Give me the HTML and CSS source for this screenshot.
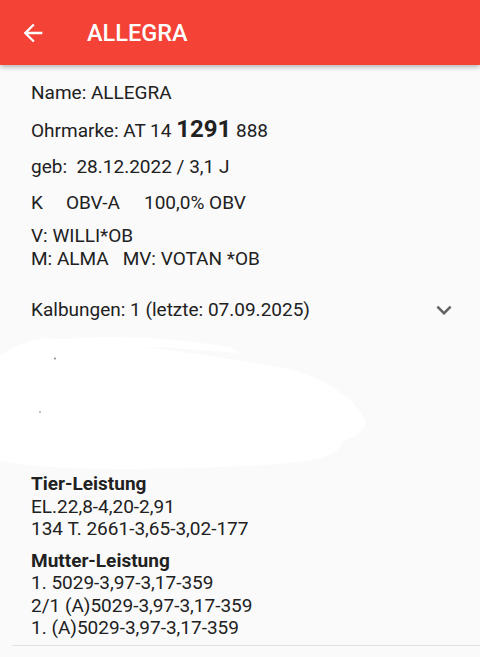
FILE: index.html
```html
<!DOCTYPE html>
<html lang="de">
<head>
    <meta charset="UTF-8">
    <meta name="viewport" content="width=device-width, initial-scale=1.0">
    <title>ALLEGRA</title>
    <link rel="stylesheet" href="styles.css">
</head>
<body>
    <header class="topbar">
        <svg class="back" viewBox="0 0 24 24"><path d="M20 11H7.83l5.59-5.59L12 4l-8 8 8 8 1.41-1.41L7.83 13H20v-2z"/></svg>
        <h1>ALLEGRA</h1>
    </header>

    <main class="content">
        <p class="row">Name: ALLEGRA</p>
        <p class="row">Ohrmarke: AT 14 <b class="big">1291</b> 888</p>
        <p class="row">geb:&nbsp; 28.12.2022 / 3,1 J</p>
        <p class="row"><span class="gap-k">K</span><span class="gap-obv">OBV-A</span>100,0% OBV</p>
        <p class="row two">V: WILLI*OB<br><span class="gap-m">M: ALMA</span>MV: VOTAN *OB</p>

        <div class="expander">
            <span>Kalbungen: 1 (letzte: 07.09.2025)</span>
            <svg class="chev" viewBox="0 0 24 24"><path d="M16.59 8.59L12 13.17 7.41 8.59 6 10l6 6 6-6z"/></svg>
        </div>

        <!-- hidden block -->
        <svg class="smear" viewBox="0 0 400 146" preserveAspectRatio="none">
            <path d="M0 30 C15 20 30 14 45 13 C110 16 200 28 270 40 C305 46 328 56 342 68 C352 74 360 84 366 96 C364 106 352 112 340 116 C345 122 330 128 318 132 C280 140 200 141 120 142 C70 142 30 140 0 134 Z"/>
            <path d="M20 20 C90 8 150 10 230 22 L240 28 C160 20 90 18 25 26 Z"/>
            <circle cx="55" cy="33" r="1" class="dot"/>
            <circle cx="40" cy="86" r="0.8" class="dot"/>
        </svg>

        <section class="perf">
            <h2>Tier-Leistung</h2>
            <div>EL.22,8-4,20-2,91</div>
            <div>134 T. 2661-3,65-3,02-177</div>
        </section>
        <section class="perf">
            <h2>Mutter-Leistung</h2>
            <div>1. 5029-3,97-3,17-359</div>
            <div>2/1 (A)5029-3,97-3,17-359</div>
            <div>1. (A)5029-3,97-3,17-359</div>
        </section>
        <hr class="divider">
    </main>
</body>
</html>
```

FILE: styles.css
```css
html, body {
    margin: 0;
    height: 100%;
}
body {
    font-family: Roboto, "Noto Sans", sans-serif;
    background: #fafafa;
    color: #212121;
    overflow: hidden;
}
.topbar {
    height: 65px;
    background: #f44336;
    display: flex;
    align-items: center;
    box-shadow: 0 2px 5px rgba(0,0,0,0.28);
    position: relative;
    z-index: 1;
}
.back {
    width: 28px;
    height: 28px;
    fill: #fff;
    margin-left: 19px;
}
.topbar h1 {
    margin: 0 0 0 40px;
    color: #fff;
    font-size: 23.5px;
    font-weight: 500;
}
.content {
    padding: 16px 0 0 31px;
}
.row {
    margin: 0 0 12px;
    font-size: 19px;
    line-height: 24px;
}
.row.two {
    line-height: 23px;
    margin-top: -3px;
    margin-bottom: 14px;
}
.big {
    font-size: 24px;
    font-weight: 700;
}
.gap-k {
    margin-right: 23px;
}
.gap-obv {
    margin-right: 24px;
}
.gap-m {
    margin-right: 14px;
}
.expander {
    display: flex;
    align-items: center;
    justify-content: space-between;
    font-size: 19px;
    line-height: 24px;
    margin-top: 25px;
    padding-right: 21px;
}
.chev {
    width: 30px;
    height: 30px;
    fill: #616161;
}
.smear {
    display: block;
    margin-left: -31px;
    width: 400px;
    height: 148px;
}
.smear path {
    fill: #fff;
}
.smear .dot {
    fill: #888;
}
.perf {
    font-size: 19px;
    line-height: 22.5px;
    margin-bottom: 9px;
}
.perf h2 {
    margin: 0;
    font-size: 19px;
    font-weight: 700;
}
.divider {
    border: none;
    border-top: 1px solid #e3e3e3;
    margin: -4px 0 0 -19px;
}
```
